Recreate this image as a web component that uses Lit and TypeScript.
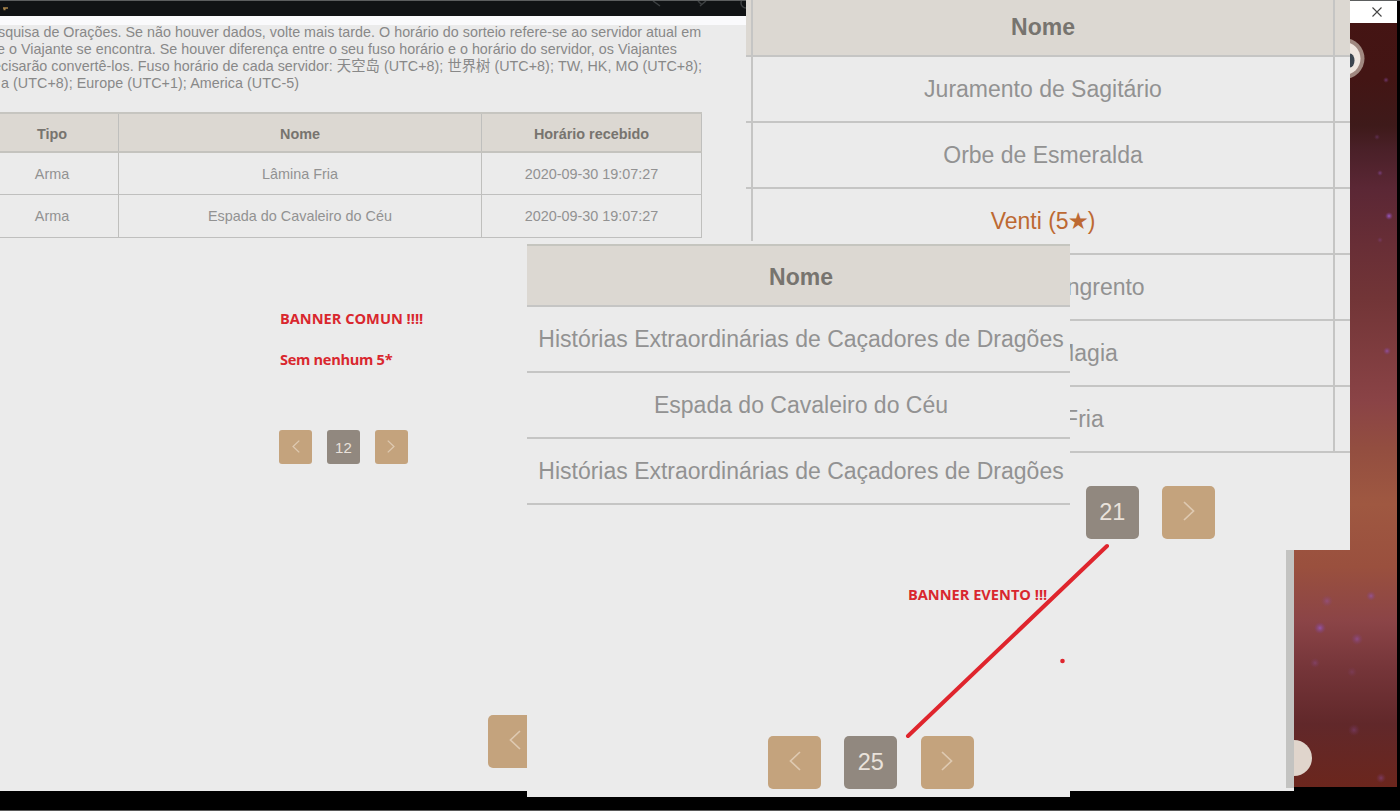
import { LitElement, html, css, svg } from 'lit';
import { customElement, property } from 'lit/decorators.js';

@customElement('page-nav')
export class PageNav extends LitElement {
  @property({ type: String }) page = '1';

  static styles = css`
:host {
  display: flex;
  gap: 23.3px;
}

.btn {
  display: flex;
  align-items: center;
  justify-content: center;
  width: 53px;
  height: 53px;
  border: 0;
  padding: 0;
  border-radius: 5px;
  background-color: #c4a37d;
  color: #e9e2db;
  font: 23.5px "Liberation Sans", Arial, sans-serif;
}

.current {
  background-color: #91887f;
}

svg {
  width: 12px;
  height: 20px;
  fill: none;
  stroke: #dec9b1;
  stroke-width: 1.7;
  margin-bottom: 3px;
}

:host([small]) {
  gap: 14.5px;
}

:host([small]) .btn {
  width: 33.3px;
  height: 34px;
  border-radius: 3px;
  font-size: 15px;
}

:host([small]) svg {
  width: 8px;
  height: 13px;
  stroke-width: 2;
  margin-bottom: 1px;
}
  `;

  render() {
    return html`
<button class="btn"><svg viewBox="0 0 12 20"><path d="M11 1 L1.5 10 L11 19"/></svg></button>
<button class="btn current">${this.page}</button>
<button class="btn"><svg viewBox="0 0 12 20"><path d="M1 1 L10.5 10 L1 19"/></svg></button>
    `;
  }
}

@customElement('app-root')
export class AppRoot extends LitElement {
  static styles = css`
:host {
  display: block;
  position: relative;
  width: 1400px;
  height: 811px;
  overflow: hidden;
  background-color: #000;
  font-family: "Liberation Sans", Arial, "Noto Sans CJK SC", sans-serif;
  color: #929292;
}

/* desktop in the back */
.desktop {
  display: grid;
  grid-template-columns: 1286px 8px 103px;
  height: 809px;
  border-top: 1px solid #5c5e5f;
  border-bottom: 1px solid #5a5a5a;
}

.browser {
  height: 790px;
  overflow: hidden;
  background-color: #ebebeb;
}

.titlebar {
  height: 15px;
  background-color: #111315;
}

.titlebar svg {
  display: block;
}

.toolbar {
  height: 9px;
  background-color: #fafafc;
}

.scroll {
  height: 787px;
  background-color: #c3c3c1;
  border-bottom: 3px solid #ebebeb;
}

.side {
  height: 786px;
}

.side svg {
  display: block;
}

.intro {
  margin: -1px 0 0;
  height: 88px;
  font-size: 14.3px;
  line-height: 17px;
  color: #888;
  white-space: nowrap;
}

.intro span {
  display: block;
  width: max-content;
}

.l1 { margin-left: -2px; letter-spacing: 0.02px; }
.l2 { margin-left: -3px; letter-spacing: 0.03px; }
.l3 { margin-left: -7px; letter-spacing: 0.04px; }
.l4 { margin-left: 1px; letter-spacing: 0.06px; }

.row {
  display: grid;
  box-sizing: border-box;
}

.cell {
  display: flex;
  align-items: center;
  justify-content: center;
  box-sizing: border-box;
  white-space: nowrap;
}

.head {
  background-color: #dcd8d2;
  color: #77746f;
  font-weight: bold;
}

.log {
  width: 702px;
  font-size: 14.4px;
  border-top: 2px solid #c6c5c0;
}

.log .row {
  grid-template-columns: 119px 363px 220px;
  height: 43px;
  border-bottom: 1px solid #bfbfbe;
}

.log .head {
  height: 39px;
  border-bottom: 2px solid #c4c3be;
}

.log .head + .row {
  height: 42px;
}

.log .head .cell {
  padding-top: 2px;
}

.log .cell {
  border-right: 1px solid #bfbfbd;
}

.log .cell:first-child {
  padding-right: 14px;
}

.note {
  margin: 0;
  font: bold 14.6px/20px "Open Sans", "Noto Sans", sans-serif;
  color: #d9272e;
  white-space: nowrap;
}

.common {
  margin: 70px 0 0 280px;
}

.common .note + .note {
  margin-top: 21px;
  letter-spacing: -0.3px;
}

.common page-nav {
  margin-top: 61px;
  margin-left: -1px;
}

.buried {
  margin: 251px 0 0 488px;
}

/* pasted captures */
.paste {
  position: absolute;
  background-color: #ebebeb;
  font-size: 23px;
  overflow: hidden;
}

.paste .row {
  height: 66px;
  border-bottom: 2px solid #c5c5c4;
}

.event {
  left: 746px;
  top: 0;
  width: 604px;
  height: 550px;
}

.event .row {
  grid-template-columns: 7px 582px 1fr;
}

.event .head {
  height: 57px;
}

.event .cell {
  border-right: 2px solid #c5c5c4;
}

.event .cell:last-child {
  border-right: 0;
}

.event page-nav {
  margin: 33px 0 0 263.5px;
}

.five {
  color: #bd6932;
}

.star {
  position: relative;
  top: -1px;
  font-size: 19px;
  line-height: 0;
}

.weapons {
  left: 527px;
  top: 241px;
  width: 543px;
  height: 556px;
}

.weapons .head {
  margin-top: 3px;
  height: 63px;
  border-top: 2px solid #c5c5bf;
}

.weapons .cell {
  padding-left: 5px;
}

.weapons .head .cell {
  padding-top: 4px;
}

.weapons page-nav {
  margin: 231px 0 0 241px;
}

.evento {
  position: absolute;
  left: 908px;
  top: 584px;
}

.marker {
  position: absolute;
  left: 0;
  top: 0;
}
  `;

  log = [
    ['Arma', 'Lâmina Fria', '2020-09-30 19:07:27'],
    ['Arma', 'Espada do Cavaleiro do Céu', '2020-09-30 19:07:27'],
  ];

  event = [
    'Juramento de Sagitário',
    'Orbe de Esmeralda',
    html`<span class="five">Venti (5<span class="star">★</span>)</span>`,
    'Espadão Sangrento',
    'Guia de Magia',
    'Lâmina Fria',
  ];

  weapons = [
    'Histórias Extraordinárias de Caçadores de Dragões',
    'Espada do Cavaleiro do Céu',
    'Histórias Extraordinárias de Caçadores de Dragões',
  ];

  // x, y, radius, opacity
  stars = [
    [92, 80, 3, 0.5],
    [83, 137, 3, 0.3],
    [86, 173, 3, 0.5],
    [95, 216, 4, 1],
    [86, 240, 3, 0.3],
    [93, 351, 4, 0.7],
    [33, 601, 6, 0.4],
    [77, 596, 5, 0.6],
    [26, 628, 6, 0.8],
    [63, 639, 6, 0.5],
    [21, 663, 5, 0.3],
    [58, 672, 5, 0.2],
    [60, 730, 6, 0.3],
    [87, 778, 5, 0.4],
  ];

  renderSide() {
    return html`
<svg width="103" height="786" viewBox="0 1 103 786">
  <defs>
    <linearGradient id="sky" x1="0" y1="0" x2="0" y2="1">
      <stop offset="0" stop-color="#451413"/>
      <stop offset="0.1" stop-color="#431514"/>
      <stop offset="0.16" stop-color="#3e1a1a"/>
      <stop offset="0.19" stop-color="#4a2028"/>
      <stop offset="0.24" stop-color="#5b2735"/>
      <stop offset="0.31" stop-color="#682e36"/>
      <stop offset="0.38" stop-color="#723537"/>
      <stop offset="0.51" stop-color="#8a4346"/>
      <stop offset="0.57" stop-color="#934e40"/>
      <stop offset="0.64" stop-color="#9f5841"/>
      <stop offset="0.72" stop-color="#9a503e"/>
      <stop offset="0.79" stop-color="#8b4447"/>
      <stop offset="0.85" stop-color="#753539"/>
      <stop offset="0.92" stop-color="#61282a"/>
      <stop offset="1" stop-color="#6b261d"/>
    </linearGradient>
    <radialGradient id="star">
      <stop offset="0" stop-color="#9a5bc4"/>
      <stop offset="1" stop-color="#7d3f8c" stop-opacity="0"/>
    </radialGradient>
  </defs>
  <rect width="103" height="787" fill="url(#sky)"/>
  ${this.stars.map(([x, y, r, o]) => svg`<circle cx=${x} cy=${y} r=${r} opacity=${o} fill="url(#star)"/>`)}
  <rect width="103" height="23" fill="#fff"/>
  <path d="M78.500 7.500 l9 9 M87.500 7.500 l-9 9" stroke="#444" stroke-width="1.100"/>
  <circle cx="50" cy="58.500" r="20.500" fill="#a08880"/>
  <circle cx="50" cy="58.500" r="16.500" fill="#efe6df"/>
  <ellipse cx="56" cy="60.500" rx="4.500" ry="7" fill="#3d4650"/>
  <circle cx="0" cy="758" r="18" fill="#e0d5cc"/>
</svg>
    `;
  }

  render() {
    return html`
<div class="desktop">
  <div class="browser">
    <div class="titlebar">
      <svg width="750" height="15" fill="none" stroke="#3c3f41" stroke-width="1.500">
        <path d="M3 7 h5 M3.500 8.500 h2" stroke="#a8844a"/>
        <path d="M653 0 l7 5 M698 0 l4 4 M700 5 l6 -5"/>
        <circle cx="746" cy="2" r="5"/>
      </svg>
    </div>
    <div class="toolbar"></div>
    <p class="intro">
      <span class="l1">squisa de Orações. Se não houver dados, volte mais tarde. O horário do sorteio refere-se ao servidor atual em</span>
      <span class="l2">e o Viajante se encontra. Se houver diferença entre o seu fuso horário e o horário do servidor, os Viajantes</span>
      <span class="l3">ecisarão convertê-los. Fuso horário de cada servidor: 天空岛 (UTC+8); 世界树 (UTC+8); TW, HK, MO (UTC+8);</span>
      <span class="l4">a (UTC+8); Europe (UTC+1); America (UTC-5)</span>
    </p>
    <div class="log">
      <div class="row head">
        <div class="cell">Tipo</div>
        <div class="cell">Nome</div>
        <div class="cell">Horário recebido</div>
      </div>
      ${this.log.map((row) => html`
      <div class="row">${row.map((text) => html`<div class="cell">${text}</div>`)}</div>`)}
    </div>
    <div class="common">
      <p class="note">BANNER COMUN !!!!</p>
      <p class="note">Sem nenhum 5*</p>
      <page-nav small page="12"></page-nav>
    </div>
    <page-nav class="buried" page=""></page-nav>
  </div>
  <div class="scroll"></div>
  <div class="side">${this.renderSide()}</div>
</div>

<div class="paste event">
  <div class="row head">
    <div class="cell"></div>
    <div class="cell">Nome</div>
    <div class="cell"></div>
  </div>
  ${this.event.map((name) => html`
  <div class="row">
    <div class="cell"></div>
    <div class="cell">${name}</div>
    <div class="cell"></div>
  </div>`)}
  <page-nav page="21"></page-nav>
</div>

<div class="paste weapons">
  <div class="row head"><div class="cell">Nome</div></div>
  ${this.weapons.map((name) => html`<div class="row"><div class="cell">${name}</div></div>`)}
  <page-nav page="25"></page-nav>
</div>

<p class="note evento">BANNER EVENTO !!!</p>
<svg class="marker" width="1400" height="811">
  <path d="M1107 546 L908 736" stroke="#df252d" stroke-width="4" stroke-linecap="round"/>
  <circle cx="1062.500" cy="661" r="2.300" fill="#df252d"/>
</svg>
    `;
  }
}
